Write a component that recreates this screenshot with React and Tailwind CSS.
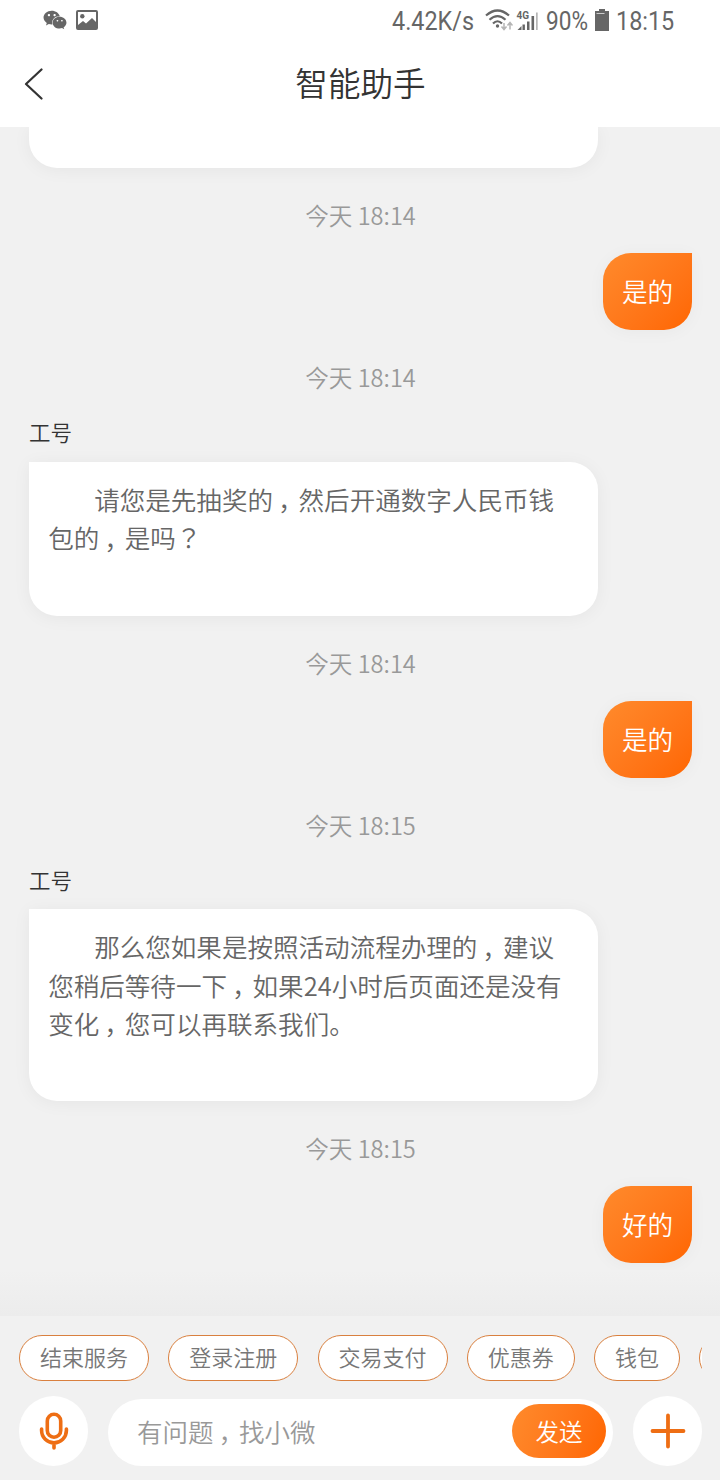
import React from 'react';
import { FaWeixin } from 'react-icons/fa';

const MESSAGES = [
	{ time: '今天 18:14', mine: true, lines: ['是的'] },
	{
		time: '今天 18:14',
		name: '工号',
		lines: ['请您是先抽奖的，然后开通数字人民币钱', '包的，是吗？'],
	},
	{ time: '今天 18:14', mine: true, lines: ['是的'] },
	{
		time: '今天 18:15',
		name: '工号',
		lines: [
			'那么您如果是按照活动流程办理的，建议',
			'您稍后等待一下，如果24小时后页面还是没有',
			'变化，您可以再联系我们。',
		],
	},
	{ time: '今天 18:15', mine: true, lines: ['好的'] },
];

const SHORTCUTS = ['结束服务', '登录注册', '交易支付', '优惠券', '钱包'];

// full-width commas and question marks are centred in their cell
function Punctuated({ text }) {
	return text.split(/([，？])/).map((part, i) =>
		part === '，' || part === '？' ? (
			<span
				key={i}
				className={
					"leading-none font-['Noto_Sans_CJK_TC',sans-serif]" +
					(part === '，' ? ' -ml-[0.07em] mr-[0.07em] align-[-0.33em]' : '')
				}
			>
				{part}
			</span>
		) : (
			part
		),
	);
}

function StatusBar() {
	return (
		<div className="flex h-[41px] shrink-0 items-center bg-white pl-[43px] font-[Roboto,sans-serif] text-[26px] leading-none font-normal text-[#666]">
			<FaWeixin className="mb-px h-[22px] w-[24px] shrink-0" />
			<svg className="mb-px ml-[9px] h-[20px] w-[22px] shrink-0" viewBox="0 0 22 20">
				<path
					fill="currentColor"
					fillRule="evenodd"
					d="M2 0h18a2 2 0 0 1 2 2v16a2 2 0 0 1-2 2H2a2 2 0 0 1-2-2V2a2 2 0 0 1 2-2ZM2 2v13l5-4 3 2.500 6-5.500 4 4V2Z"
				/>
				<circle cx="6.300" cy="6.300" r="2.200" fill="currentColor" />
			</svg>
			<span className="ml-[294px] w-[93px] shrink-0 origin-left scale-x-[0.9]">
				4.42K/s
			</span>
			<svg className="h-[26px] w-[28px] shrink-0" viewBox="0 0 28 26">
				<g fill="none" stroke="currentColor" strokeWidth="2.200">
					<path d="M1 7.500Q12.500-2.500 24 7.500" />
					<path d="M4.500 11.800Q12.500 4.500 20.500 11.800" />
					<path d="M8 15.500Q12.500 11 17 15.500" />
				</g>
				<circle cx="12.500" cy="18" r="1.700" fill="currentColor" />
				<path
					d="M19 15v6M16.500 18.500l2.500 3 2.500-3M25 21.500v-7M22.500 17.500l2.500-3 2.500 3"
					fill="none"
					stroke="#b5b5b5"
					strokeWidth="1.500"
				/>
			</svg>
			<svg className="ml-[3px] h-[21px] w-[22px] shrink-0" viewBox="0 0 22 21">
				<text x="0.500" y="8.500" fontSize="10" fontWeight="700" fill="currentColor">
					4G
				</text>
				<path
					fill="currentColor"
					d="M1.500 20l4-4v4ZM6.500 14.500h2.400v5.500h-2.400ZM11 11.500h2.500v8.500h-2.500ZM15.500 6h2.600v14h-2.600Z"
				/>
				<path fill="#b5b5b5" d="M20 2.500h1.700v17.500h-1.700Z" />
			</svg>
			<span className="ml-[8px] w-[49px] shrink-0 origin-left scale-x-[0.87]">
				90%
			</span>
			<svg className="mb-[2px] h-[22px] w-[14px] shrink-0" viewBox="0 0 14 22">
				<path fill="currentColor" d="M4 0h6v2h4v20H0V2h4Z" />
				<path d="M1.500 4.500h8" stroke="#ccc" strokeWidth="1" />
			</svg>
			<span className="ml-[7px] shrink-0 origin-left scale-x-[0.9]">18:15</span>
		</div>
	);
}

function TitleBar() {
	return (
		<div className="flex h-[86px] shrink-0 items-center bg-white">
			<div className="w-[120px] pl-[24px]">
				<svg className="h-[32px] w-[20px]" viewBox="0 0 20 32">
					<path
						d="M17.500 1.500 2 16l15.500 14.500"
						fill="none"
						stroke="#333"
						strokeWidth="2.200"
						strokeLinecap="round"
						strokeLinejoin="round"
					/>
				</svg>
			</div>
			<h1 className="mb-[3px] flex-1 pl-px text-center text-[32.6px] leading-none text-[#333]">
				智能助手
			</h1>
			<div className="w-[120px]" />
		</div>
	);
}

function Message({ time, name, mine, lines }) {
	return (
		<div>
			<div className="mt-[30px] mb-[18px] h-[37px] text-center text-[23.6px] leading-[35px] text-[#999]">
				{time}
			</div>
			{name && (
				<div className="mt-[21px] mb-[13.56px] h-[30px] text-[21.5px] leading-[28px] text-[#333]">
					{name}
				</div>
			)}
			{mine ? (
				<div className="ml-auto h-[77px] w-[89px] rounded-[28px] rounded-tr-none bg-linear-135 from-[#ff8a2b] to-[#ff6600] text-center text-[25.6px] leading-[75px] text-white shadow-[0_2px_18px_rgba(0,0,0,0.04)]">
					{lines[0]}
				</div>
			) : (
				<div className="w-[569px] rounded-[28px] rounded-tl-none bg-white px-[19.2px] pt-[18.4px] pb-[59px] indent-[46px] text-[25.55px] leading-[38.3px] whitespace-nowrap text-[#666] shadow-[0_2px_18px_rgba(0,0,0,0.05)]">
					{lines.map((line, i) => (
						<p key={line} className={i > 0 ? 'h-[38.3px] indent-0' : 'h-[38.3px]'}>
							<Punctuated text={line} />
						</p>
					))}
				</div>
			)}
		</div>
	);
}

function InputBar() {
	return (
		<div className="h-[164px] shrink-0 bg-[#f1f1f1] pt-[19px] pr-[18px] pl-[19px]">
			<div className="flex gap-[19.25px] overflow-hidden">
				{SHORTCUTS.map((label) => (
					<button
						key={label}
						className="h-[46px] shrink-0 rounded-full border border-[#d9803f] bg-white px-[20px] pb-[3px] text-[22px] leading-[41px] text-[#777]"
					>
						{label}
					</button>
				))}
				{/* next shortcut peeks in from the right edge */}
				<button className="h-[46px] w-[86px] shrink-0 rounded-full border border-[#d9803f] bg-white" />
			</div>
			<div className="mt-[15px] flex items-center">
				<button className="flex h-[70px] w-[69px] shrink-0 items-center justify-center rounded-full bg-white pl-px">
					<svg className="h-[38px] w-[30px]" viewBox="0 0 30 38">
						<g
							fill="none"
							stroke="#ee6e14"
							strokeWidth="3.600"
							strokeLinecap="round"
						>
							<rect x="8.300" y="2.300" width="13.400" height="23" rx="6.700" />
							<path d="M2.600 17v1.500a12.400 12.400 0 0 0 24.800 0V17M15 31v5" />
						</g>
					</svg>
				</button>
				<div className="mt-[3px] ml-[20px] flex h-[67px] w-[505px] items-center rounded-full bg-white pr-[7px] pl-[29px]">
					<span className="mb-[4px] h-[26px] flex-1 text-[25.5px] leading-[26px] text-[#999]">
						<Punctuated text="有问题，找小微" />
					</span>
					<button className="mb-[3px] h-[54px] w-[94px] rounded-full bg-linear-110 from-[#ff8a2b] to-[#ff6600] text-[23.5px] leading-[54px] text-white">
						发送
					</button>
				</div>
				<button className="ml-[20px] flex h-[70px] w-[69px] shrink-0 items-center justify-center rounded-full bg-white">
					<svg className="h-[36px] w-[36px]" viewBox="0 0 36 36">
						<path
							d="M18 2.500v31M2.500 18h31"
							stroke="#ee6e14"
							strokeWidth="3.800"
							strokeLinecap="round"
						/>
					</svg>
				</button>
			</div>
		</div>
	);
}

export default function App() {
	return (
		<div className="flex h-[1480px] w-[720px] flex-col overflow-hidden bg-[#f1f1f1] font-['Noto_Sans_CJK_SC',sans-serif] font-[350]">
			<StatusBar />
			<TitleBar />
			<div className="flex min-h-0 flex-1 flex-col overflow-hidden pr-[28px] pl-[29px]">
				<div className="h-[41px] w-[569px] shrink-0 rounded-b-[28px] bg-white shadow-[0_2px_18px_rgba(0,0,0,0.05)]" />
				{MESSAGES.map((message, i) => (
					<Message key={i} {...message} />
				))}
				<div className="mt-auto -mr-[28px] -ml-[29px] h-[46px] shrink-0 bg-linear-to-b from-[#f1f1f1] to-[#ececec]" />
			</div>
			<InputBar />
		</div>
	);
}
